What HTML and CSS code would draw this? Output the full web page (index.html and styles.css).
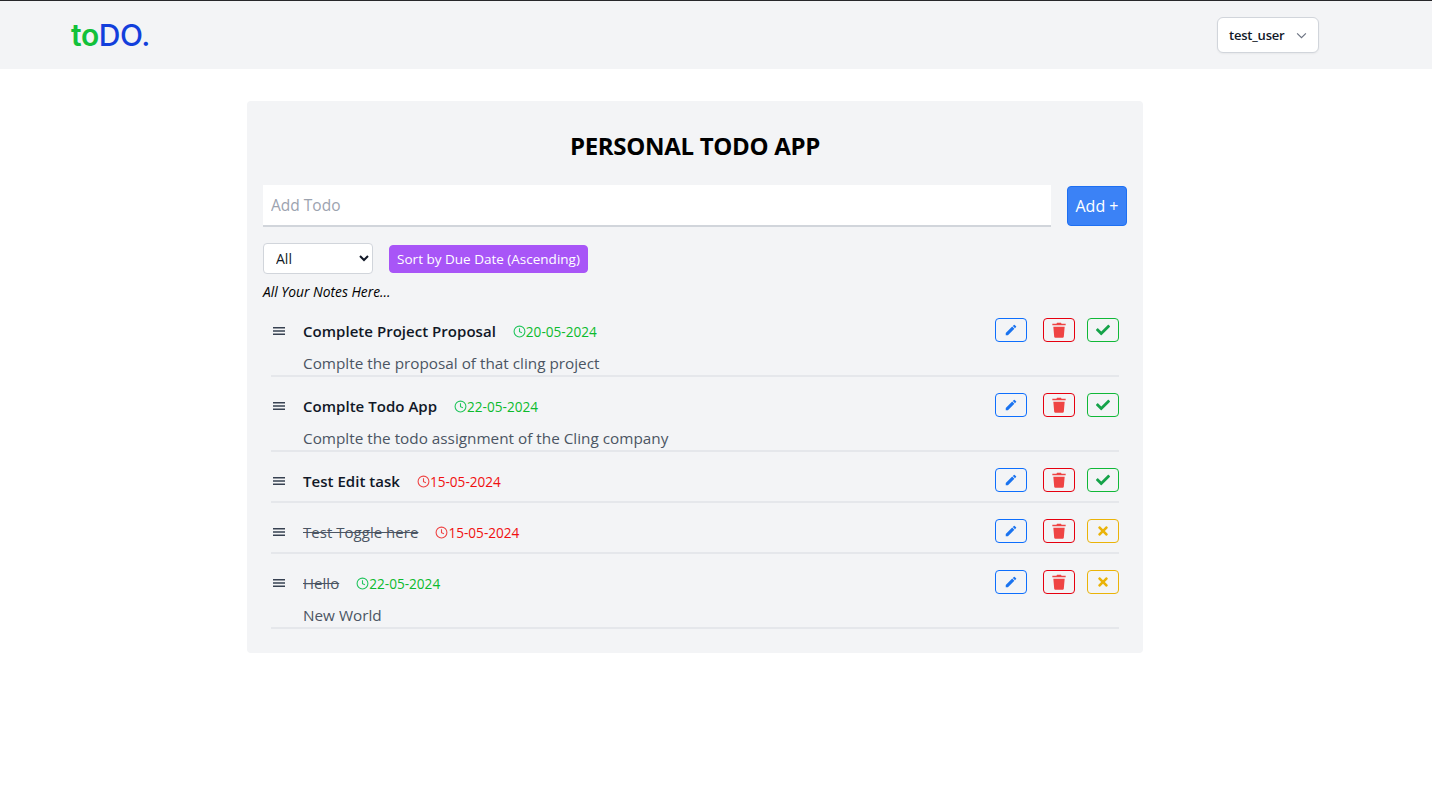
FILE: index.html
```html
<!DOCTYPE html>
<html lang="en">
<head>
    <meta charset="UTF-8">
    <meta name="viewport" content="width=device-width, initial-scale=1.0">
    <title>toDO.</title>
    <link rel="stylesheet" href="styles.css">
</head>
<body>
    <svg class="icon-defs" width="0" height="0" aria-hidden="true">
        <symbol id="i-edit" viewBox="0 0 24 24"><path d="M3 17.25V21h3.75L17.81 9.94l-3.75-3.75L3 17.25zM20.71 7.04a1 1 0 0 0 0-1.41l-2.34-2.34a1 1 0 0 0-1.41 0l-1.83 1.83 3.75 3.75 1.83-1.83z"/></symbol>
        <symbol id="i-trash" viewBox="0 0 24 24"><path d="M9 1h6l.8 1.700H22v2.300H2V2.700h6.200zM3.500 7h17l-1.300 15a1.800 1.800 0 0 1-1.800 1.500H6.600a1.800 1.800 0 0 1-1.800-1.500z"/></symbol>
        <symbol id="i-check" viewBox="0 0 512 512"><path d="M173.898 439.404l-166.4-166.4c-9.997-9.997-9.997-26.206 0-36.204l36.203-36.204c9.997-9.998 26.207-9.998 36.204 0L192 312.69 432.095 72.596c9.997-9.997 26.207-9.997 36.204 0l36.203 36.204c9.997 9.997 9.997 26.206 0 36.204l-294.4 294.401c-9.998 9.997-26.207 9.997-36.204-.001z"/></symbol>
        <symbol id="i-times" viewBox="0 0 352 512"><path d="M242.72 256l100.07-100.07c12.28-12.28 12.28-32.19 0-44.48l-22.24-22.24c-12.28-12.28-32.19-12.28-44.48 0L176 189.28 75.93 89.21c-12.28-12.28-32.19-12.28-44.48 0L9.21 111.45c-12.28 12.28-12.28 32.19 0 44.48L109.28 256 9.21 356.07c-12.28 12.28-12.28 32.19 0 44.48l22.24 22.24c12.28 12.28 32.2 12.28 44.48 0L176 322.72l100.07 100.07c12.28 12.28 32.2 12.28 44.48 0l22.24-22.24c12.28-12.28 12.28-32.19 0-44.48L242.72 256z"/></symbol>
        <symbol id="i-clock" viewBox="0 0 24 24"><circle cx="12" cy="12" r="10" fill="none" stroke="currentColor" stroke-width="2"/><path d="M12 6v6.500l4.500 2" fill="none" stroke="currentColor" stroke-width="2"/></symbol>
        <symbol id="i-menu" viewBox="0 0 12 8"><path d="M0 0h12v1.400H0zM0 3.300h12v1.400H0zM0 6.600h12V8H0z"/></symbol>
    </svg>

    <nav class="navbar">
        <div class="logo"><span class="logo-to">to</span><span class="logo-do">DO.</span></div>
        <button class="user-menu" type="button">
            test_user
            <svg class="chevron" viewBox="0 0 12 8" width="11" height="7"><path d="M1 1.500l5 5 5-5" fill="none" stroke="currentColor" stroke-width="1.300"/></svg>
        </button>
    </nav>

    <main class="card">
        <h1 class="card-title">PERSONAL TODO APP</h1>

        <form class="add-form">
            <input class="add-input" type="text" placeholder="Add Todo">
            <button class="add-btn" type="button">Add +</button>
        </form>

        <div class="filters">
            <select class="filter-select">
                <option>All</option>
            </select>
            <button class="sort-btn" type="button">Sort by Due Date (Ascending)</button>
        </div>

        <p class="notes-label">All Your Notes Here...</p>

        <ul class="todo-list">
            <li class="todo">
                <div class="todo-row">
                    <svg class="drag"><use href="#i-menu"/></svg>
                    <span class="todo-title">Complete Project Proposal</span>
                    <span class="due due-ok"><svg class="clock"><use href="#i-clock"/></svg>20-05-2024</span>
                    <div class="actions">
                        <button class="act act-edit" type="button"><svg class="act-icon"><use href="#i-edit"/></svg></button>
                        <button class="act act-delete" type="button"><svg class="act-icon"><use href="#i-trash"/></svg></button>
                        <button class="act act-done" type="button"><svg class="act-icon"><use href="#i-check"/></svg></button>
                    </div>
                </div>
                <p class="todo-desc">Complte the proposal of that cling project</p>
            </li>
            <li class="todo">
                <div class="todo-row">
                    <svg class="drag"><use href="#i-menu"/></svg>
                    <span class="todo-title">Complte Todo App</span>
                    <span class="due due-ok"><svg class="clock"><use href="#i-clock"/></svg>22-05-2024</span>
                    <div class="actions">
                        <button class="act act-edit" type="button"><svg class="act-icon"><use href="#i-edit"/></svg></button>
                        <button class="act act-delete" type="button"><svg class="act-icon"><use href="#i-trash"/></svg></button>
                        <button class="act act-done" type="button"><svg class="act-icon"><use href="#i-check"/></svg></button>
                    </div>
                </div>
                <p class="todo-desc">Complte the todo assignment of the Cling company</p>
            </li>
            <li class="todo">
                <div class="todo-row">
                    <svg class="drag"><use href="#i-menu"/></svg>
                    <span class="todo-title">Test Edit task</span>
                    <span class="due due-late"><svg class="clock"><use href="#i-clock"/></svg>15-05-2024</span>
                    <div class="actions">
                        <button class="act act-edit" type="button"><svg class="act-icon"><use href="#i-edit"/></svg></button>
                        <button class="act act-delete" type="button"><svg class="act-icon"><use href="#i-trash"/></svg></button>
                        <button class="act act-done" type="button"><svg class="act-icon"><use href="#i-check"/></svg></button>
                    </div>
                </div>
            </li>
            <li class="todo">
                <div class="todo-row">
                    <svg class="drag"><use href="#i-menu"/></svg>
                    <span class="todo-title is-done">Test Toggle here</span>
                    <span class="due due-late"><svg class="clock"><use href="#i-clock"/></svg>15-05-2024</span>
                    <div class="actions">
                        <button class="act act-edit" type="button"><svg class="act-icon"><use href="#i-edit"/></svg></button>
                        <button class="act act-delete" type="button"><svg class="act-icon"><use href="#i-trash"/></svg></button>
                        <button class="act act-undo" type="button"><svg class="act-icon"><use href="#i-times"/></svg></button>
                    </div>
                </div>
            </li>
            <li class="todo">
                <div class="todo-row">
                    <svg class="drag"><use href="#i-menu"/></svg>
                    <span class="todo-title is-done">Hello</span>
                    <span class="due due-ok"><svg class="clock"><use href="#i-clock"/></svg>22-05-2024</span>
                    <div class="actions">
                        <button class="act act-edit" type="button"><svg class="act-icon"><use href="#i-edit"/></svg></button>
                        <button class="act act-delete" type="button"><svg class="act-icon"><use href="#i-trash"/></svg></button>
                        <button class="act act-undo" type="button"><svg class="act-icon"><use href="#i-times"/></svg></button>
                    </div>
                </div>
                <p class="todo-desc">New World</p>
            </li>
        </ul>
    </main>
</body>
</html>
```

FILE: styles.css
```css
* {
    box-sizing: border-box;
}

body {
    margin: 0;
    border-top: 1px solid #27272a;
    background-color: white;
    font-family: "Open Sans", "Noto Sans", sans-serif;
    color: black;
}

.icon-defs {
    display: block;
    height: 0;
}

.navbar {
    height: 68px;
    padding: 0 113px 0 71px;
    background-color: #f3f4f6;
    display: flex;
    justify-content: space-between;
    align-items: center;
}

.logo {
    font-family: Inter, sans-serif;
    font-size: 30px;
    font-weight: 500;
    letter-spacing: -0.4px;
}

.logo-to {
    color: #12c13a;
    font-weight: 600;
}

.logo-do {
    color: #123fdc;
}

.user-menu {
    width: 102px;
    height: 36px;
    padding: 0 0 0 11px;
    background-color: white;
    border: 1px solid #d1d5db;
    border-radius: 6px;
    box-shadow: 0 1px 2px rgba(0, 0, 0, 0.05);
    font-family: inherit;
    font-size: 13px;
    font-weight: 600;
    letter-spacing: -0.2px;
    color: #111827;
    display: flex;
    align-items: center;
    gap: 11px;
}

.chevron {
    color: #6b7280;
}

.card {
    width: 896px;
    margin: 32px 0 0 247px;
    padding: 16px 16px 24px;
    background-color: #f3f4f6;
    border-radius: 4px;
}

.card-title {
    margin: 13px 0 23px;
    font-size: 24px;
    line-height: 32px;
    font-weight: 700;
    letter-spacing: -0.3px;
    text-align: center;
}

.add-form {
    display: flex;
    align-items: center;
    gap: 16px;
    margin-bottom: 16px;
}

.add-input {
    flex: 1;
    height: 42px;
    padding: 0 8px;
    border: 0;
    border-bottom: 2px solid #d1d5db;
    background-color: white;
    font-family: inherit;
    font-size: 15.500px;
}

.add-input::placeholder {
    color: #9ca3af;
    opacity: 1;
}

.add-btn {
    width: 60px;
    height: 40px;
    padding: 0;
    background-color: #3b82f6;
    border: 1px solid #1d6ff2;
    border-radius: 4px;
    color: white;
    font-family: inherit;
    font-size: 16px;
}

.filters {
    display: flex;
    align-items: center;
    gap: 16px;
    margin-bottom: 8px;
}

.filter-select {
    width: 110px;
    height: 31px;
    padding: 0 8px;
    background-color: white;
    border: 1px solid #d1d5db;
    border-radius: 4px;
    font-family: inherit;
    font-size: 14px;
    color: #111827;
}

.sort-btn {
    width: 199px;
    height: 28px;
    padding: 0;
    background-color: #a855f7;
    border: 1px solid #a855f7;
    border-radius: 4px;
    color: white;
    font-family: inherit;
    font-size: 13.500px;
}

.notes-label {
    margin: 0;
    font-size: 13.800px;
    line-height: 20px;
    font-style: italic;
}

.todo-list {
    list-style: none;
    margin: 0;
    padding: 0 8px;
}

.todo {
    padding: 16px 0 9px;
    border-bottom: 2px solid #e5e7eb;
}

.todo-row {
    height: 24px;
    display: flex;
    align-items: center;
}

.drag {
    width: 12px;
    height: 8px;
    margin: 1px 18px 0 2px;
    fill: #374151;
}

.todo-title {
    margin-right: 17px;
    font-size: 15px;
    font-weight: 600;
    letter-spacing: 0.03px;
    color: #111827;
    position: relative;
    top: 1px;
}

.todo-title.is-done {
    font-weight: 400;
    color: #4b5563;
    text-decoration: line-through;
}

.due {
    display: flex;
    align-items: center;
    font-size: 13.600px;
    position: relative;
    top: 1px;
}

.due-ok {
    color: #0dbb2e;
}

.due-late {
    color: #f01010;
}

.clock {
    width: 13px;
    height: 13px;
}

.due-ok .clock {
    color: #22c55e;
}

.due-late .clock {
    color: #ef4444;
}

.actions {
    margin-left: auto;
    display: flex;
    gap: 12px;
}

.act {
    width: 32px;
    height: 24px;
    padding: 0;
    background: transparent;
    border: 1px solid;
    border-radius: 4px;
    display: flex;
    align-items: center;
    justify-content: center;
}

.act-edit {
    margin-right: 4px;
    border-color: #0d6efd;
    fill: #1a73f0;
}

.act-delete {
    border-color: #e6000f;
    fill: #ef4444;
}

.act-done {
    border-color: #10b838;
    fill: #16a34a;
}

.act-undo {
    border-color: #eab308;
    fill: #eab308;
}

.act-icon {
    width: 14px;
    height: 14px;
}

.act-delete .act-icon {
    width: 16px;
    height: 16px;
}

.todo-desc {
    margin: 13px 0 -5px 32px;
    height: 16px;
    font-size: 15.300px;
    line-height: 16px;
    color: #4b5563;
}
```
